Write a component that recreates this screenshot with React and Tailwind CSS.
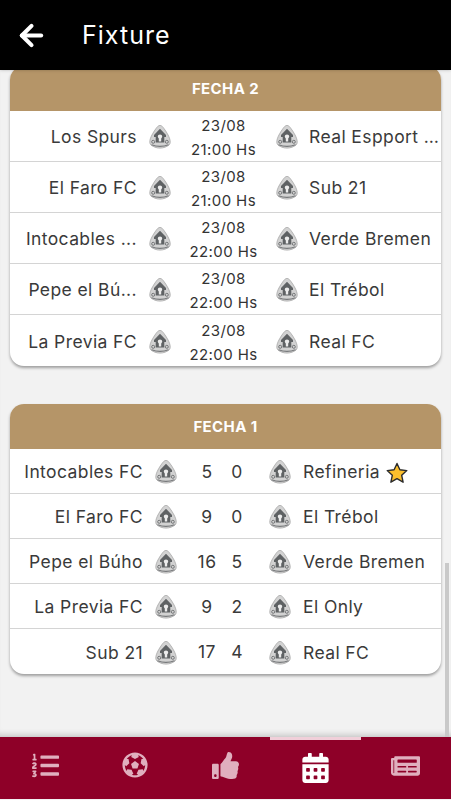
import React from 'react';
import { ArrowLeft } from 'lucide-react';
import { FaListOl, FaFutbol, FaThumbsUp, FaCalendarAlt, FaNewspaper } from 'react-icons/fa';

const font = "font-['Inter','Open_Sans',sans-serif]";

const Crest = () => (
  <svg viewBox="0 0 24 24" className="w-6 h-6 shrink-0">
    <path d="M12 .4C13.600.4 14.800 1.800 16.200 3.800c2 2.800 4.500 6.700 5.500 10 .8 2.700.8 4.900-.7 6.200-2 1.700-5.500 3.100-9 3.100s-7-1.400-9-3.100c-1.500-1.300-1.500-3.500-.7-6.200 1-3.300 3.500-7.200 5.500-10C9.200 1.800 10.400.4 12 .4z" fill="#d2d2d2" stroke="#a8a8a8" strokeWidth=".8" />
    <path d="M12 3.800 18 10v2h-1.700v5.400H7.700V12H6v-2z" fill="#5f6264" />
    <path d="M12 9.600c1.300 0 2.200.9 2.200 2 0 .9-.5 1.400-1 2v3h-2.400v-3c-.5-.6-1-1.100-1-2 0-1.100.9-2 2.200-2z" fill="#ececec" />
    <circle cx="5.200" cy="16.800" r="1.500" fill="none" stroke="#6a6c6e" strokeWidth=".9" />
    <circle cx="18.800" cy="16.800" r="1.500" fill="none" stroke="#6a6c6e" strokeWidth=".9" />
    <path d="M3.500 19.700c5 2 12 2 17 0" fill="none" stroke="#77797b" strokeWidth="1.100" />
  </svg>
);

const Star = () => (
  <svg viewBox="0 0 24 24" className="w-[24px] h-[24px] shrink-0 ml-[5px] mt-[1px]">
    <path d="M12 2.500 14.900 8.800 21.800 9.600 16.700 14.300 18.100 21.200 12 17.700 5.900 21.200 7.300 14.300 2.200 9.600 9.100 8.800z" fill="#fbbf2d" stroke="#2b2b2b" strokeWidth="1.400" strokeLinejoin="round" />
  </svg>
);

const fecha2 = [
  { home: 'Los Spurs', away: 'Real Espport …', date: '23/08', time: '21:00 Hs' },
  { home: 'El Faro FC', away: 'Sub 21', date: '23/08', time: '21:00 Hs' },
  { home: 'Intocables ...', away: 'Verde Bremen', date: '23/08', time: '22:00 Hs' },
  { home: 'Pepe el Bú...', away: 'El Trébol', date: '23/08', time: '22:00 Hs' },
  { home: 'La Previa FC', away: 'Real FC', date: '23/08', time: '22:00 Hs' },
];

const fecha1 = [
  { home: 'Intocables FC', away: 'Refineria', a: 5, b: 0, star: true },
  { home: 'El Faro FC', away: 'El Trébol', a: 9, b: 0 },
  { home: 'Pepe el Búho', away: 'Verde Bremen', a: 16, b: 5 },
  { home: 'La Previa FC', away: 'El Only', a: 9, b: 2 },
  { home: 'Sub 21', away: 'Real FC', a: 17, b: 4 },
];

const Upcoming = ({ m }) => (
  <div className="h-[51px] pt-[2px] flex items-center border-b border-[#d4d4d4] last:border-b-0">
    <div className="w-[127px] pt-[1px] text-right whitespace-nowrap">{m.home}</div>
    <div className="ml-[11px]"><Crest /></div>
    <div className="w-[103px] pt-[2px] text-center text-[15px] leading-6 text-[#333]">
      <div>{m.date}</div>
      <div>{m.time}</div>
    </div>
    <Crest />
    <div className="ml-[10px] pt-[1px] whitespace-nowrap">{m.away}</div>
  </div>
);

const Played = ({ m }) => (
  <div className="h-[45px] pt-[2px] flex items-center border-b border-[#d4d4d4] last:border-b-0">
    <div className="w-[133px] pt-[1px] text-right whitespace-nowrap">{m.home}</div>
    <div className="ml-[11px]"><Crest /></div>
    <div className="w-[30px] ml-[14px] text-center">{m.a}</div>
    <div className="w-[30px] text-center">{m.b}</div>
    <div className="ml-[16px]"><Crest /></div>
    <div className="ml-[11px] pt-[1px] whitespace-nowrap">{m.away}</div>
    {m.star && <Star />}
  </div>
);

export default function App() {
  return (
    <div className={`${font} relative w-[451px] h-[800px] flex flex-col overflow-hidden bg-[#f2f2f2] text-[#3a3a3a] text-[17.500px] tracking-[0.4px]`}>
      <header className="relative z-10 h-[70px] shrink-0 bg-black flex items-center text-white shadow-sm">
        <ArrowLeft className="w-[33px] h-[33px] ml-[15px]" strokeWidth={3} />
        <h1 className="ml-[34px] pt-[2px] text-[25px] font-normal tracking-[1px]">Fixture</h1>
      </header>

      <main className="flex-1 min-h-0 overflow-hidden px-[10px] flex flex-col gap-[38px] shadow-[inset_0_-7px_6px_-5px_rgba(0,0,0,0.2)]">
        <section className="-mt-[4px] shrink-0 rounded-[14px] bg-white shadow-[0_2px_3px_rgba(0,0,0,0.35)] overflow-hidden">
          <div className="h-[45px] pt-[1px] bg-[#b59568] flex items-center justify-center text-white text-[15px] font-bold tracking-[0.4px]">FECHA 2</div>
          {fecha2.map((m) => <Upcoming key={m.home} m={m} />)}
        </section>

        <section className="shrink-0 rounded-[14px] bg-white shadow-[0_2px_3px_rgba(0,0,0,0.35)] overflow-hidden">
          <div className="h-[45px] pt-[1px] bg-[#b59568] flex items-center justify-center text-white text-[15px] font-bold tracking-[0.4px]">FECHA 1</div>
          {fecha1.map((m) => <Played key={m.home} m={m} />)}
        </section>
      </main>

      {/* scrollbar */}
      <div className="absolute right-[2px] top-[563px] w-[4px] h-[174px] bg-[#c9c9c9]" />

      <nav className="relative h-[62px] shrink-0 mb-[1px] bg-[#8e0028] flex items-center text-[#e0afbe]">
        <div className="absolute left-[270px] top-0 w-[91px] h-[3px] bg-[#f0cfd9]" />
        <div className="flex-1 flex justify-center"><FaListOl className="w-[27px] h-[27px] -translate-y-[3px]" /></div>
        <div className="flex-1 flex justify-center"><FaFutbol className="w-[26px] h-[26px] -translate-y-[3px]" /></div>
        <div className="flex-1 flex justify-center"><FaThumbsUp className="w-[27px] h-[27px] -translate-y-[3px]" /></div>
        <div className="flex-1 flex justify-center text-white"><FaCalendarAlt className="w-[27px] h-[30px]" /></div>
        <div className="flex-1 flex justify-center"><FaNewspaper className="w-[29px] h-[26px] -translate-y-[2px]" /></div>
      </nav>
    </div>
  );
}
